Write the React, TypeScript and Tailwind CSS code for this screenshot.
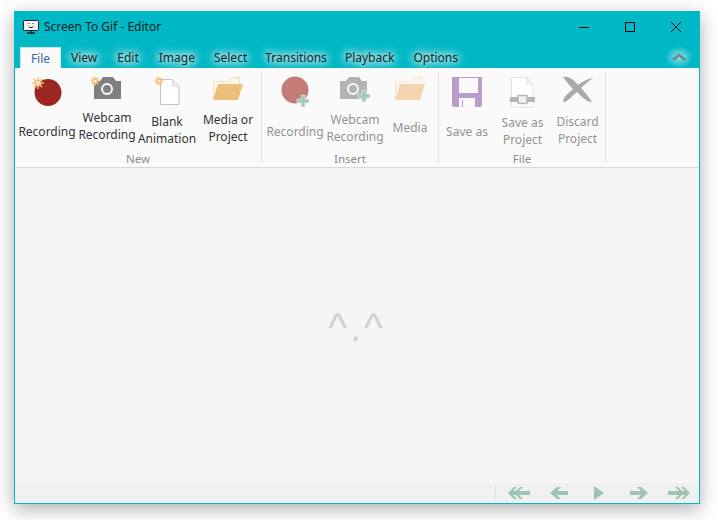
import type { ReactNode } from 'react';

const FONT = "font-['Noto_Sans','Open_Sans',sans-serif]";

// Sparkle that marks the "new" actions
function Spark({ x, y, r = 5 }: { x: number; y: number; r?: number }) {
  const rays = [0, 45, 90, 135];
  return (
    <g>
      {rays.map((a) => (
        <line
          key={a}
          x1={x - r}
          y1={y}
          x2={x + r}
          y2={y}
          stroke="#f2c27c"
          strokeWidth="1.4"
          transform={`rotate(${a} ${x} ${y})`}
        />
      ))}
      <circle cx={x} cy={y} r={r * 0.6} fill="#f2c27c" />
      <circle cx={x} cy={y} r={r * 0.3} fill="#fff4dc" />
    </g>
  );
}

function Plus({ x, y }: { x: number; y: number }) {
  return <path d={`M${x - 2} ${y - 6}h4v4h4v4h-4v4h-4v-4h-4v-4h4z`} fill="#a3c9ba" stroke="#fafafa" strokeWidth="0.5" />;
}

function RecordIcon({ fill, cx, cy, spark, plus }: { fill: string; cx: number; cy: number; spark?: boolean; plus?: boolean }) {
  return (
    <svg width="40" height="36" viewBox="0 0 40 36">
      <circle cx={cx} cy={cy} r="13.5" fill={fill} />
      {spark && <Spark x={11} y={8} r={6} />}
      {plus && <Plus x={28} y={26} />}
    </svg>
  );
}

function CameraIcon({ fill, dx, spark, plus }: { fill: string; dx: number; spark?: boolean; plus?: boolean }) {
  return (
    <svg width="40" height="36" viewBox="0 0 40 36">
      <g transform={`translate(${dx} 0)`}>
        <path d="M7 6h6l3-4h10l3 4h5v18H7z" fill={fill} />
        <circle cx="20" cy="14" r="5" fill="none" stroke="#fafafa" strokeWidth="2" />
      </g>
      {spark && <Spark x={8} y={6} r={4.5} />}
      {plus && <Plus x={29} y={21} />}
    </svg>
  );
}

function PageIcon() {
  return (
    <svg width="40" height="36" viewBox="0 0 40 36">
      <path d="M13.5 4.5h12l6.5 6.500v18.500H13.500z" fill="#fff" stroke="#c4c4c4" strokeWidth="1" />
      <path d="M25.500 4.500v6.500h6.500" fill="#ececec" stroke="#dcdcdc" strokeWidth="1" />
      <Spark x={12} y={6} r={4.5} />
    </svg>
  );
}

function FolderIcon({ opacity = 1 }: { opacity?: number }) {
  return (
    <svg width="40" height="36" viewBox="0 0 40 36" opacity={opacity}>
      <path d="M5.500 25V6.500h15l3-4h8v7" fill="#fdf6ea" stroke="#f3dcb8" strokeWidth="1" />
      <path d="M10 9h25l-5 16H5z" fill="#edbe7c" />
    </svg>
  );
}

function SaveIcon() {
  return (
    <svg width="40" height="36" viewBox="0 0 40 36">
      <path d="M5 2h30v28a2 2 0 0 1-2 2H7a2 2 0 0 1-2-2z" fill="#bc9ccb" />
      <rect x="12" y="3" width="19" height="15" fill="#fafafa" />
      <rect x="12" y="23" width="16" height="9" fill="#fafafa" />
      <rect x="15" y="25" width="1" height="7" fill="#bc9ccb" />
    </svg>
  );
}

function ProjectIcon() {
  return (
    <svg width="40" height="36" viewBox="0 0 40 36">
      <path d="M8.500 2.500h15l6.500 6.500v23H8.500z" fill="#fff" stroke="#e2e2e2" strokeWidth="1" />
      <path d="M23.500 2.500v6.500h6.500" fill="#f0f0f0" stroke="#e2e2e2" strokeWidth="1" />
      <rect x="7" y="22" width="25" height="5" fill="#b5b5b5" />
      <rect x="15" y="20.500" width="9" height="8" fill="#f0f0f0" stroke="#b5b5b5" strokeWidth="1.400" />
    </svg>
  );
}

function DiscardIcon() {
  return (
    <svg width="40" height="36" viewBox="0 0 40 36">
      <path
        d="M5 2c6-1 10 2 15 8 4-3 9-6 15-7-4 3-8 6-12 10 4 4 8 9 11 14-5 0-10-5-15-10-4 3-8 8-12 10-2 1-2-2-1-4 2-3 6-6 9-9C11 10 8 6 5 2z"
        fill="#a9a9a9"
      />
    </svg>
  );
}

type RibbonItem = {
  icon: ReactNode;
  label: string[];
  width: string;
  gap: string;
  muted?: boolean;
};

const newItems: RibbonItem[] = [
  { icon: <RecordIcon fill="#9c2620" cx={21} cy={17.500} spark />, label: ['Recording'], width: 'w-[60px]', gap: 'mt-[12px]' },
  { icon: <CameraIcon fill="#808080" dx={0} spark />, label: ['Webcam', 'Recording'], width: 'w-[60px]', gap: 'mt-[-2px]' },
  { icon: <PageIcon />, label: ['Blank', 'Animation'], width: 'w-[60px]', gap: 'mt-[2px]' },
  { icon: <FolderIcon />, label: ['Media or', 'Project'], width: 'w-[62px]', gap: 'mt-[0px]' },
];

const insertItems: RibbonItem[] = [
  { icon: <RecordIcon fill="#c47c78" cx={20} cy={15} plus />, label: ['Recording'], width: 'w-[60px]', gap: 'mt-[12px]', muted: true },
  { icon: <CameraIcon fill="#b3b3b3" dx={-2} plus />, label: ['Webcam', 'Recording'], width: 'w-[60px]', gap: 'mt-[0px]', muted: true },
  { icon: <FolderIcon opacity={0.6} />, label: ['Media'], width: 'w-[50px]', gap: 'mt-[8px]', muted: true },
];

const fileItems: RibbonItem[] = [
  { icon: <SaveIcon />, label: ['Save as'], width: 'w-[56px]', gap: 'mt-[12px]', muted: true },
  { icon: <ProjectIcon />, label: ['Save as', 'Project'], width: 'w-[55px]', gap: 'mt-[3px]', muted: true },
  { icon: <DiscardIcon />, label: ['Discard', 'Project'], width: 'w-[55px]', gap: 'mt-[2px]', muted: true },
];

function RibbonGroup({ title, items, width, pl }: { title: string; items: RibbonItem[]; width: string; pl: string }) {
  return (
    <div className={`${width} h-[91px] mt-[4px] border-r border-[#e2e2e2] flex flex-col`}>
      <div className={`flex ${pl} h-[76px] pt-[3px] text-center`}>
        {items.map((item) => (
          <div key={item.label.join(' ')} className={`${item.width} shrink-0 flex flex-col items-center`}>
            <div className="h-[36px] flex items-center justify-center">{item.icon}</div>
            <div
              className={`${item.gap} text-[12px] leading-[17px] whitespace-nowrap ${
                item.muted ? 'text-[#929292]' : 'text-[#333333]'
              }`}
            >
              {item.label.map((line) => (
                <div key={line}>{line}</div>
              ))}
            </div>
          </div>
        ))}
      </div>
      <div className="mt-auto mb-[-3px] text-center text-[11.5px] leading-[15px] text-[#8c8c8c]">{title}</div>
    </div>
  );
}

function NavArrow({ children }: { children: ReactNode }) {
  return (
    <div className="w-[40px] flex justify-center">
      <svg width="26" height="14" viewBox="0 0 26 14" fill="#9fc4b4">
        {children}
      </svg>
    </div>
  );
}

const tabs = [
  { name: 'View', margin: 'ml-[10px]' },
  { name: 'Edit', margin: 'ml-[20px]' },
  { name: 'Image', margin: 'ml-[20px]' },
  { name: 'Select', margin: 'ml-[19px]' },
  { name: 'Transitions', margin: 'ml-[18px]' },
  { name: 'Playback', margin: 'ml-[18px]' },
  { name: 'Options', margin: 'ml-[19px]' },
];

export default function App() {
  return (
    <div className={`w-[718px] h-[520px] bg-white pl-[14px] pt-[11px] overflow-hidden ${FONT}`}>
      <div className="w-[686px] h-[493px] border border-[#00b8c6] bg-[#f5f5f5] flex flex-col shadow-[0_5px_18px_rgba(0,0,0,0.32)]">
        {/* Title bar */}
        <div className="h-[56px] bg-[#00b8c6] flex flex-col shrink-0">
          <div className="h-[30px] flex items-center">
            <svg className="ml-[8px]" width="16" height="14" viewBox="0 0 16 14">
              <rect x="0.5" y="0.5" width="15" height="10" rx="1" fill="#f2f2f2" stroke="#222" />
              <path d="M4 13h8M8 11v2" stroke="#222" strokeWidth="1.4" />
              <path d="M5.5 6.5c1 1.5 4 1.5 5 0" fill="none" stroke="#222" />
              <path d="M6 3v1M10 3v1" stroke="#222" />
            </svg>
            <span className="ml-[5px] text-[12px] text-[#0a1e20]">Screen To Gif - Editor</span>
            <div className="ml-auto flex">
              <div className="w-[46px] h-[30px] flex items-center justify-center">
                <svg width="10" height="10" viewBox="0 0 10 10">
                  <path d="M0 5.500h10" stroke="#000" />
                </svg>
              </div>
              <div className="w-[46px] h-[30px] flex items-center justify-center">
                <svg width="10" height="10" viewBox="0 0 10 10">
                  <rect x="0.5" y="0.5" width="9" height="9" fill="none" stroke="#000" />
                </svg>
              </div>
              <div className="w-[46px] h-[30px] flex items-center justify-center">
                <svg width="10" height="10" viewBox="0 0 10 10">
                  <path d="M0 0l10 10M10 0L0 10" stroke="#000" strokeWidth="0.9" />
                </svg>
              </div>
            </div>
          </div>
          {/* Tabs */}
          <div className="flex items-end h-[26px] pl-[5px] text-[12px]">
            <div className="w-[41px] h-[21px] bg-[#fafafa] border border-b-0 border-[#cfe3e6] text-[#3a62a0] text-center leading-[22px]">
              File
            </div>
            {tabs.map((tab) => (
              <div
                key={tab.name}
                className={`${tab.margin} h-[21px] leading-[22px] text-[#10282a] [text-shadow:0_0_7px_#ffffff,0_0_10px_#ffffff,0_0_13px_#ffffff]`}
              >
                {tab.name}
              </div>
            ))}
            <div className="ml-auto mr-[6px] w-[28px] h-[22px] flex items-center justify-center bg-[radial-gradient(closest-side,#8ce2e8,transparent)]">
              <svg width="14" height="9" viewBox="0 0 14 9">
                <path d="M1 7l6-5 6 5" fill="none" stroke="#6f8a8c" strokeWidth="2.6" />
              </svg>
            </div>
          </div>
        </div>

        {/* Ribbon */}
        <div className="h-[100px] bg-[#fafafa] border-b border-[#d8d8d8] flex shrink-0">
          <RibbonGroup title="New" items={newItems} width="w-[247px]" pl="pl-[2px]" />
          <RibbonGroup title="Insert" items={insertItems} width="w-[177px]" pl="pl-[3px]" />
          <RibbonGroup title="File" items={fileItems} width="w-[167px]" pl="pl-0" />
        </div>

        {/* Empty state */}
        <div className="flex-1 flex items-center justify-center pt-[3px]">
          <div className="font-['Liberation_Sans',sans-serif] text-[40px] leading-none tracking-[3px] text-[#d0d0d0]">^.^</div>
        </div>

        {/* Status bar */}
        <div className="h-[20px] bg-[#f0f0f0] flex items-center justify-end shrink-0">
          <div className="h-[16px] border-l border-[#e0e0e0] mr-[3px]" />
          <NavArrow>
            <path d="M8 1L2 7l6 6h3L7 9h3l4 4h3l-4-4h11V5H13l4-4h-3l-4 4H7l4-4z" />
          </NavArrow>
          <NavArrow>
            <path d="M11 1L4 7l7 6h4l-4-4h11V5H11l4-4z" />
          </NavArrow>
          <NavArrow>
            <path d="M8 0l10 7-10 7z" />
          </NavArrow>
          <NavArrow>
            <path d="M15 1l7 6-7 6h-4l4-4H4V5h11l-4-4z" />
          </NavArrow>
          <NavArrow>
            <path d="M18 1l6 6-6 6h-3l4-4h-3l-4 4H9l4-4H2V5h11L9 1h3l4 4h3l-4-4z" />
          </NavArrow>
        </div>
      </div>
    </div>
  );
}
